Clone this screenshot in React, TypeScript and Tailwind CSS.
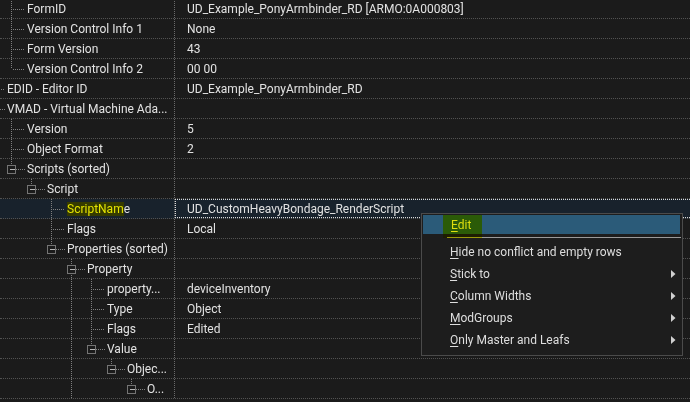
import type { ReactNode } from 'react';

type Row = {
  label: ReactNode;
  value?: string;
  level: number;
  box?: boolean;
  last?: boolean;
  guides?: number[];
  selected?: boolean;
};

const rows: Row[] = [
  { label: 'FormID', value: 'UD_Example_PonyArmbinder_RD [ARMO:0A000803]', level: 1 },
  { label: 'Version Control Info 1', value: 'None', level: 1 },
  { label: 'Form Version', value: '43', level: 1 },
  { label: 'Version Control Info 2', value: '00 00', level: 1, last: true },
  { label: 'EDID - Editor ID', value: 'UD_Example_PonyArmbinder_RD', level: 0 },
  { label: 'VMAD - Virtual Machine Ada...', level: 0, box: true },
  { label: 'Version', value: '5', level: 1 },
  { label: 'Object Format', value: '2', level: 1 },
  { label: 'Scripts (sorted)', level: 1, box: true, last: true },
  { label: 'Script', level: 2, box: true, last: true },
  {
    label: (
      <>
        <span className="bg-[#353a00] py-[1px] text-[#e4e400]">ScriptNam</span>e
      </>
    ),
    value: 'UD_CustomHeavyBondage_RenderScript',
    level: 3,
    selected: true,
  },
  { label: 'Flags', value: 'Local', level: 3 },
  { label: 'Properties (sorted)', level: 3, box: true, last: true },
  { label: 'Property', level: 4, box: true },
  { label: 'property...', value: 'deviceInventory', level: 5, guides: [71] },
  { label: 'Type', value: 'Object', level: 5, guides: [71] },
  { label: 'Flags', value: 'Edited', level: 5, guides: [71] },
  { label: 'Value', level: 5, box: true, last: true, guides: [71] },
  { label: 'Objec...', level: 6, box: true, last: true, guides: [71] },
  { label: 'O...', level: 7, box: true, last: true, guides: [71] },
];

const LINE = '#808080';

function TreeLines({ row }: { row: Row }) {
  const c = 20 * row.level - 9;
  const mid = 10;
  return (
    <svg className="absolute left-0 top-0" width={175} height={19} shapeRendering="crispEdges">
      {(row.guides ?? []).map((g) => (
        <line key={g} x1={g + 0.5} y1={0} x2={g + 0.5} y2={19} stroke={LINE} strokeDasharray="1 1" />
      ))}
      <line x1={c + 0.5} y1={0} x2={c + 0.5} y2={row.last ? mid : 19} stroke={LINE} strokeDasharray="1 1" />
      <line x1={row.box ? c + 5 : c + 2} y1={mid + 0.5} x2={20 * row.level + 5} y2={mid + 0.5} stroke={LINE} strokeDasharray="1 1" />
      {row.box && (
        <g>
          <rect x={c - 3.5} y={mid - 3.5} width={8} height={8} fill="#1b1b1b" stroke="#747474" />
          <line x1={c - 1} y1={mid + 0.5} x2={c + 4} y2={mid + 0.5} stroke="#b8b8b8" />
        </g>
      )}
    </svg>
  );
}

function Arrow() {
  return (
    <svg width="5" height="8" viewBox="0 0 5 8" className="mr-[6px]">
      <path d="M0 0 L4.5 4 L0 8 Z" fill="#d0d0d0" />
    </svg>
  );
}

const menuItems: { label: ReactNode; sub?: boolean }[] = [
  { label: <><u>H</u>ide no conflict and empty rows</> },
  { label: <><u>S</u>tick to</>, sub: true },
  { label: <><u>C</u>olumn Widths</>, sub: true },
  { label: <><u>M</u>odGroups</>, sub: true },
  { label: <><u>O</u>nly Master and Leafs</>, sub: true },
];

function ContextMenu() {
  return (
    <div className="absolute left-[421px] top-[213px] w-[262px] border border-[#4b4b4b] bg-[#1d1d1d] pb-[4px] text-[12px] text-[#dedede]">
      <div className="relative mx-[1px] mr-[2px] mt-[1px] flex h-[19px] items-center bg-[#2b5b79] pl-[28px]">
        <span>
          <u className="underline-offset-2">E</u>dit
        </span>
        <div className="absolute left-[20px] top-0 h-[23px] w-[39px] bg-[#ffff10] mix-blend-multiply" />
      </div>
      <div className="flex h-[7px] items-center pl-[25px] pr-[1px]">
        <div className="h-px w-full bg-[#9a9a9a]" />
      </div>
      {menuItems.map((m, i) => (
        <div key={i} className="flex h-[22px] items-center justify-between pl-[28px]">
          <span className="[&_u]:underline-offset-2">{m.label}</span>
          {m.sub && <Arrow />}
        </div>
      ))}
    </div>
  );
}

export default function App() {
  return (
    <div
      className="relative h-[402px] w-[690px] overflow-hidden bg-[#1b1b1b] text-[12px] text-[#e2e2e2]"
      style={{ fontFamily: 'Roboto, "Noto Sans", sans-serif' }}
    >
      <div className="-mt-px flex flex-col">
        {rows.map((row, i) => (
          <div
            key={i}
            className={`flex h-[20px] shrink-0 border-b border-dotted border-[#525252] ${
              row.selected ? 'bg-[#18222c]' : ''
            }`}
          >
            <div className="relative w-[175px] shrink-0 border-r border-dotted border-[#6a6a6a]">
              <TreeLines row={row} />
              <div
                className="relative flex h-full items-center whitespace-nowrap pt-px leading-none"
                style={{ paddingLeft: 7 + 20 * row.level }}
              >
                {row.label}
              </div>
            </div>
            <div className="relative flex min-w-0 flex-1 items-center whitespace-nowrap pl-[12px] pt-px leading-none">
              {row.selected && (
                <div className="absolute inset-x-0 -right-4 top-0 bottom-0 border border-dotted border-[#d8d8d8]" />
              )}
              {row.value}
            </div>
          </div>
        ))}
      </div>
      <ContextMenu />
    </div>
  );
}
